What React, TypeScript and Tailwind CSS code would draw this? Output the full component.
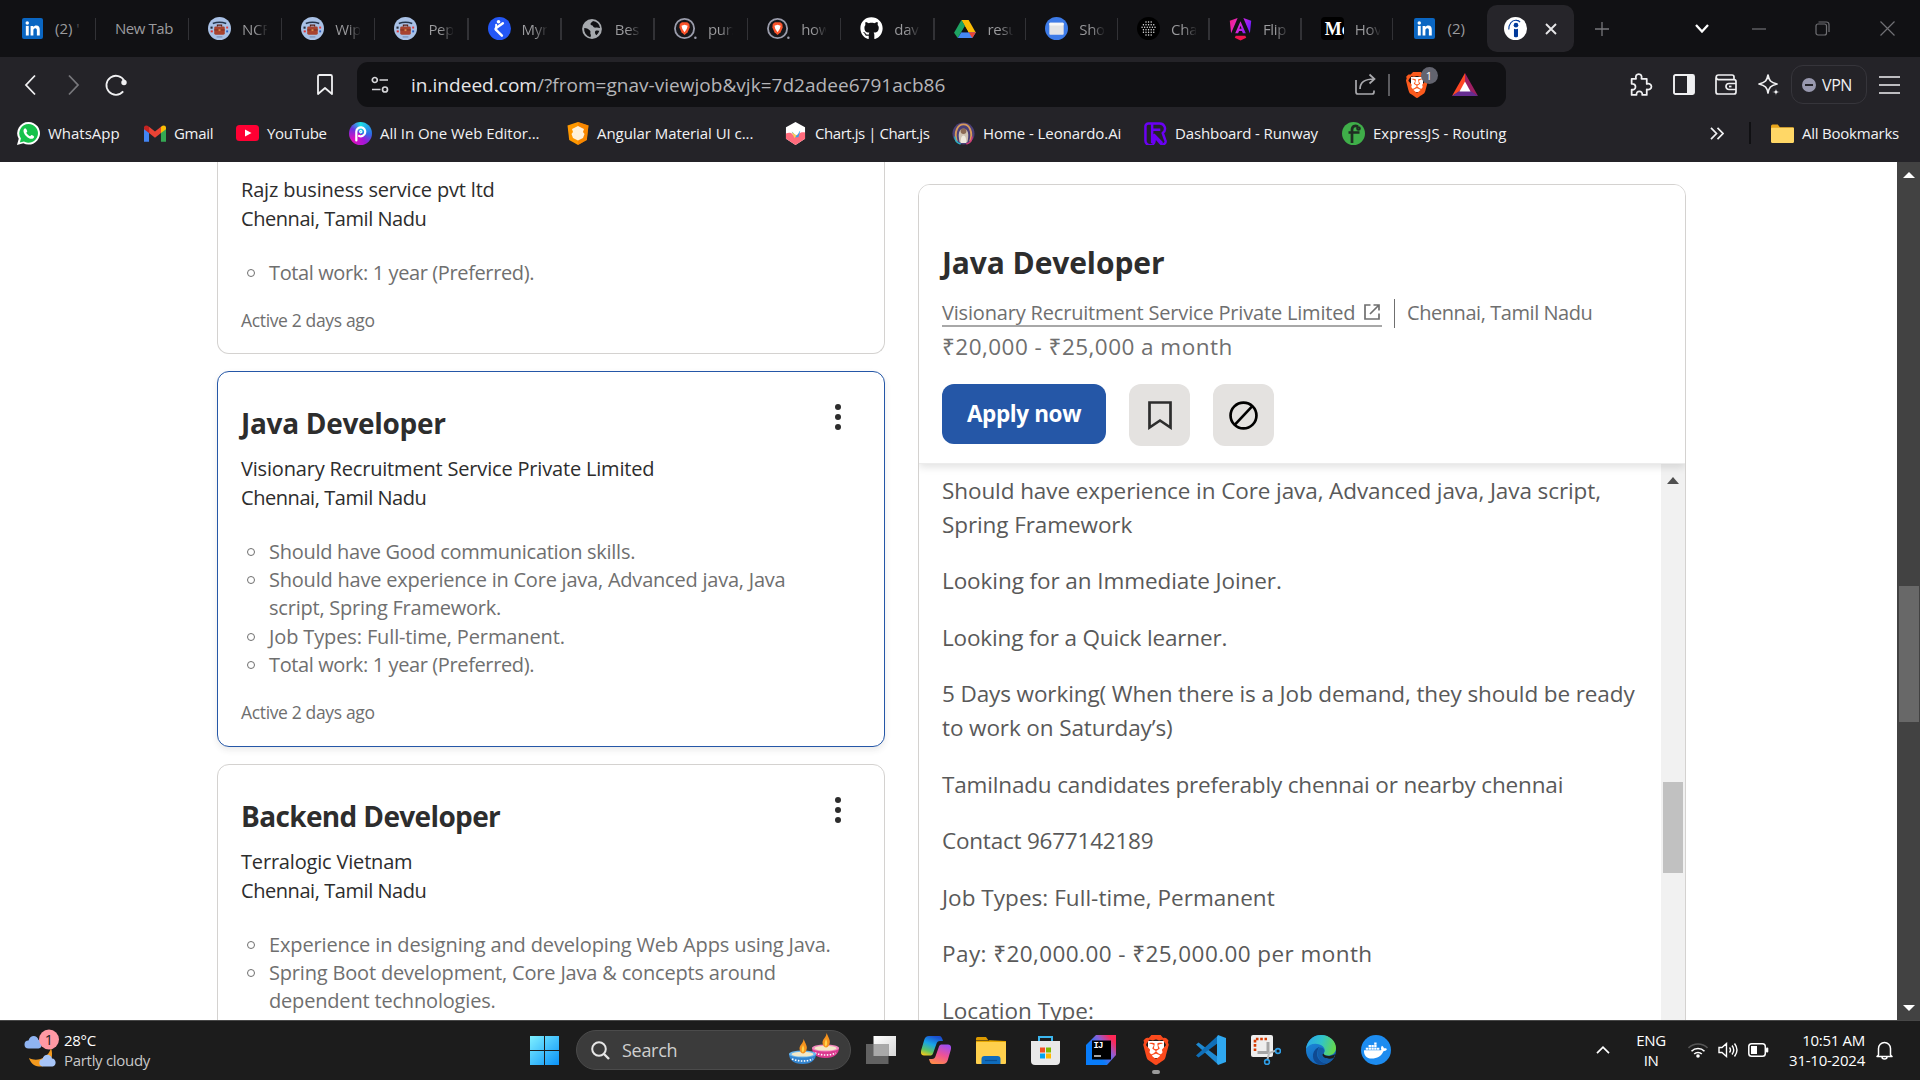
import type { ReactNode } from 'react'
import { FaGithub, FaDocker } from 'react-icons/fa'
import { SiBrave } from 'react-icons/si'

/* ---------- Browser icons ---------- */

const LinkedIn = () => (
  <div className="flex h-[21px] w-[21px] items-center justify-center rounded-[2px] bg-[#0a66c2]">
    <svg viewBox="0 0 24 24" className="h-[21px] w-[21px]" fill="#fff">
      <rect x="4.400" y="9" width="3.300" height="11" />
      <circle cx="6" cy="5.600" r="2" />
      <path d="M9.800 9H13v1.600c.6-1.100 1.800-1.900 3.400-1.900 3 0 3.900 2 3.900 4.700V20H17v-5.800c0-1.500-.4-2.600-1.800-2.600S13 12.700 13 14.200V20H9.800z" />
    </svg>
  </div>
)

const JobSeeker = () => (
  <svg viewBox="0 0 24 24" className="h-[23px] w-[23px]">
    <circle cx="12" cy="12" r="12" fill="#a9c1e6" />
    <path d="M5 6.800q7-2.600 14 0" stroke="#27364d" strokeWidth="1.500" fill="none" />
    <rect x="6.500" y="9.800" width="11" height="8.700" rx="1.500" fill="#a8432f" />
    <path d="M9.800 9.800V8.500h4.400v1.300" stroke="#5a2015" strokeWidth="1.200" fill="none" />
    <rect x="6.500" y="13" width="11" height="1" fill="#7d3021" />
    <rect x="11" y="12.700" width="2" height="2" fill="#d8894a" />
    <rect x="2.600" y="10" width="2.200" height="2.200" fill="#222b3a" />
    <rect x="2.800" y="14" width="2.200" height="2" fill="#d33" />
    <rect x="19" y="10" width="2" height="2" fill="#e33a3a" />
    <rect x="19" y="14" width="2" height="2" fill="#2a5fc0" />
    <rect x="9" y="20.300" width="6" height="1" fill="#6f86ad" />
  </svg>
)

const BlueFigure = () => (
  <svg viewBox="0 0 24 24" className="h-[23px] w-[23px]">
    <circle cx="12" cy="12" r="12" fill="#2457f5" />
    <circle cx="11" cy="5" r="1.900" fill="#fff" />
    <path d="M15.500 6.500 8.500 11.500c-.8.600-.8 1.400 0 2l6 6" stroke="#fff" strokeWidth="2.600" fill="none" strokeLinecap="round" />
    <path d="M8.500 8v5" stroke="#fff" strokeWidth="2" strokeLinecap="round" />
  </svg>
)

const Globe = () => (
  <svg viewBox="0 0 24 24" className="h-[22px] w-[22px]">
    <circle cx="12" cy="12" r="10.800" fill="#a6a9ad" />
    <path d="M3.500 11c3 .2 5 1.200 6.500 3 1 1.400-.5 2.400.5 3.600.6 1 .4 2.400-.4 3.400A9 9 0 0 1 3.500 11zM13 3.200c-1 1.800-2.800 1.600-2.600 3.600.2 1.400 2.200.8 2.800 2.200.5 1.400 2 1.800 3.400 1.400 1.600-.4 2.800.6 4.200.4A9 9 0 0 0 13 3.200zM16 14c1.400-.8 3-.4 4 0-.6 2-1.800 3.600-3.200 4.800-1.400-1.200-2.400-3.400-.8-4.800z" fill="#111114" />
  </svg>
)

const BraveSearch = () => (
  <svg viewBox="0 0 24 24" className="h-[23px] w-[23px]">
    <circle cx="11" cy="12" r="10" fill="#17171b" stroke="#9a9cab" strokeWidth="1.900" />
    <path d="M6 7.300 8.200 5.500h5.600L16 7.300l.4 3.700-2.200 5L11 18.800 7.800 16l-2.200-5z" fill="#fb542b" />
    <path d="m7.800 9 3.200-.8L14.200 9l-.8 3.300L11 16l-2.400-3.700z" fill="#fff" />
    <circle cx="22.300" cy="21.700" r="1.300" fill="#9a9cab" />
  </svg>
)

const Drive = ({ className }: { className: string }) => (
  <svg viewBox="0 0 24 22" className={className}>
    <path d="M8 1h8l8 14h-8z" fill="#fbbc04" />
    <path d="M8 1 0 15l4 6 8-13.500z" fill="#1ea362" />
    <path d="M4 21h16l4-6.500H8z" fill="#4688f4" />
    <path d="M16 14.500h8L20 21z" fill="#ea4335" />
    <path d="M12 8.500 8.300 14.500h7.400z" fill="#111114" />
  </svg>
)

const BlueWindow = () => (
  <svg viewBox="0 0 24 24" className="h-[23px] w-[23px]">
    <circle cx="12" cy="12" r="12" fill="#3d7be8" />
    <rect x="4.500" y="6" width="15" height="12.500" rx="1" fill="#e3e4e6" />
    <rect x="4.500" y="6" width="15" height="2.800" rx="1" fill="#f7f7f7" />
  </svg>
)

const Dots = () => (
  <svg viewBox="0 0 24 24" className="h-[23px] w-[23px]">
    <circle cx="12" cy="12" r="12" fill="#000" />
    <g stroke="#e4e4e4" strokeLinecap="round" strokeWidth="1.500" strokeDasharray="0 2.700">
      <path d="M9.400 5.300h6M6.700 8h11M5.300 10.700h13.600M6.700 13.400h11M6.700 16h11M9.400 18.700h6" />
    </g>
  </svg>
)

const AngularTab = () => (
  <svg viewBox="0 0 24 25" className="h-[24px] w-[23px]">
    <defs>
      <linearGradient id="ang" x1="0" y1="0" x2="1" y2="0.300">
        <stop offset="0" stopColor="#f0197a" />
        <stop offset="0.450" stopColor="#e92bd2" />
        <stop offset="1" stopColor="#7a1cff" />
      </linearGradient>
    </defs>
    <path d="M9 1 .8 4l1.400 13z M15 1l8.200 3-1.400 13z M12 4.500 6.500 17h3l1-2.500h3l1 2.500h3zM12 9l1.200 3.200h-2.400z" fill="url(#ang)" fillRule="evenodd" />
    <path d="M7 19.500h10l1 2-6 3-6-3z" fill="#f0144f" />
  </svg>
)

const Medium = () => (
  <div className="flex h-[23px] w-[23px] items-center overflow-hidden rounded-[4px] bg-black pl-1 font-['Liberation_Serif'] text-[18px] font-bold leading-none text-white">
    <span className="whitespace-nowrap">Mc</span>
  </div>
)

const IndeedIcon = () => (
  <svg viewBox="0 0 24 24" className="h-[23px] w-[23px]">
    <circle cx="12" cy="12" r="12" fill="#fff" />
    <circle cx="12.500" cy="8.500" r="2.400" fill="#003a9b" />
    <path d="M10.400 12.300c1.500.7 2.800.6 4.200 0V20c0 1.600-4.200 1.600-4.200 0z" fill="#003a9b" />
    <path d="M5 13c-.2-5 3-10.500 8.500-9.500 1.600.2 2.600 1 3.300 1.800" stroke="#003a9b" strokeWidth="1.200" fill="none" />
  </svg>
)

/* ---------- Tabs ---------- */

function Tab({ icon, label, width = 'w-[93.200px]' }: { icon: ReactNode; label: string; width?: string }) {
  return (
    <div className={`flex h-full shrink-0 items-center ${width}`}>
      <div className="flex flex-1 items-center pl-[19px]">
        <div className="flex w-[23px] shrink-0 items-center justify-center">{icon}</div>
        <div className="ml-[11px] w-[25px] overflow-hidden whitespace-nowrap bg-gradient-to-r from-[#9b9b9e] from-50% to-[#9b9b9e]/10 bg-clip-text text-[15px] leading-6 tracking-[-0.300px] text-transparent">
          {label}
        </div>
      </div>
      <div className="h-[22px] w-[1.500px] bg-[#323236]" />
    </div>
  )
}

function TabStrip() {
  const narrow = 'w-[91.800px]'
  return (
    <div className="flex h-[57px] items-center bg-[#111114] text-[#9b9b9e]">
      <div className="flex h-full w-[96px] shrink-0 items-center pl-[22px]">
        <LinkedIn />
        <div className="ml-[12px] w-[26px] flex-1 whitespace-nowrap text-[15px]">(2) <span className="text-[#4a4a4e]">'</span></div>
        <div className="h-[22px] w-[1.500px] bg-[#323236]" />
      </div>
      <div className="flex h-full w-[93px] shrink-0 items-center pl-[19px]">
        <div className="flex-1 whitespace-nowrap text-[15px] tracking-[-0.450px]">New Tab</div>
        <div className="h-[22px] w-[1.500px] bg-[#323236]" />
      </div>
      <Tab icon={<JobSeeker />} label="NCF" />
      <Tab icon={<JobSeeker />} label="Wip" />
      <Tab icon={<JobSeeker />} label="Pep" />
      <Tab icon={<BlueFigure />} label="Myn" />
      <Tab icon={<Globe />} label="Bes" />
      <Tab icon={<BraveSearch />} label="pur:" />
      <Tab icon={<BraveSearch />} label="how" />
      <Tab icon={<FaGithub className="h-[23px] w-[23px] text-white" />} label="dav" />
      <Tab icon={<Drive className="h-[20px] w-[22px]" />} label="resu" width={narrow} />
      <Tab icon={<BlueWindow />} label="Sho" width={narrow} />
      <Tab icon={<Dots />} label="Cha" width={narrow} />
      <Tab icon={<AngularTab />} label="Flip" width={narrow} />
      <Tab icon={<Medium />} label="Hov" width={narrow} />
      <div className="flex h-full w-[94px] shrink-0 items-center pl-[21px]">
        <LinkedIn />
        <div className="ml-[12px] whitespace-nowrap text-[15px]">(2)</div>
      </div>
      <div className="flex h-[47px] w-[87px] shrink-0 items-center rounded-[10px] bg-[#26252a] pl-[17px]">
        <IndeedIcon />
        <svg viewBox="0 0 12 12" className="ml-[18px] h-[12px] w-[12px]" stroke="#e6e6e8" strokeWidth="1.900">
          <path d="m1 1 10 10M11 1 1 11" />
        </svg>
      </div>
      <svg viewBox="0 0 14 14" className="ml-[21px] h-[14px] w-[14px]" stroke="#77777b" strokeWidth="1.300">
        <path d="M7 0v14M0 7h14" />
      </svg>
      <svg viewBox="0 0 14 9" className="ml-[86px] h-[9px] w-[14px]" stroke="#fff" strokeWidth="2.300" fill="none">
        <path d="m1 1 6 6.500L13 1" />
      </svg>
      <svg viewBox="0 0 14 2" className="ml-[43px] h-[2px] w-[14px]"><path d="M0 1h14" stroke="#707074" strokeWidth="1.200" /></svg>
      <svg viewBox="0 0 15 15" className="ml-[49px] h-[15px] w-[15px]" stroke="#707074" strokeWidth="1.200" fill="none">
        <rect x="1" y="3" width="10.500" height="11" rx="2" />
        <path d="M3.500 1h8A2.500 2.500 0 0 1 14 3.500V11" />
      </svg>
      <svg viewBox="0 0 15 15" className="ml-[50px] h-[15px] w-[15px]" stroke="#707074" strokeWidth="1.200">
        <path d="m.5.5 14 14m0-14-14 14" />
      </svg>
    </div>
  )
}

/* ---------- Toolbar ---------- */

const ic = 'shrink-0 overflow-visible'

function Toolbar() {
  return (
    <div className="flex h-[55px] items-center bg-[#242328]">
      <svg viewBox="0 0 11 20" className={`ml-[25px] h-[20px] w-[11px] ${ic}`} stroke="#f0f0f2" strokeWidth="1.800" fill="none"><path d="m10 .5-9 9.500 9 9.500" /></svg>
      <svg viewBox="0 0 11 20" className={`ml-[32px] h-[20px] w-[11px] ${ic}`} stroke="#77777b" strokeWidth="1.800" fill="none"><path d="m1 .5 9 9.500-9 9.500" /></svg>
      <svg viewBox="0 0 22 22" className={`ml-[26px] h-[22px] w-[22px] ${ic}`} stroke="#f0f0f2" strokeWidth="1.800" fill="none">
        <path d="M18.200 17.400A9.500 9.500 0 1 1 19.400 7" /><circle cx="19" cy="8.500" r="2.700" fill="#f0f0f2" stroke="none" />
      </svg>
      <svg viewBox="0 0 16 21" className={`ml-[190px] h-[21px] w-[16px] ${ic}`} stroke="#f0f0f2" strokeWidth="1.800" fill="none" strokeLinejoin="round">
        <path d="M1 2.500A1.500 1.500 0 0 1 2.500 1h11A1.500 1.500 0 0 1 15 2.500V20l-7-6-7 6z" />
      </svg>
      <div className="ml-[24px] flex h-[45px] w-[1149px] shrink-0 items-center rounded-[11px] bg-[#111114] pl-[14px]">
        <svg viewBox="0 0 18 18" className={`h-[18px] w-[18px] ${ic}`} stroke="#d6d6d9" strokeWidth="1.700" fill="none">
          <circle cx="3.800" cy="4" r="2.500" /><path d="M8.500 4H17M1 13.500h8.500" /><circle cx="14" cy="13.500" r="2.500" />
        </svg>
        <div className="ml-[22px] w-[534px] whitespace-nowrap text-[19px] leading-7 tracking-[0.030px] text-[#b5b5b8]">
          <span className="text-[#e6e6e8]">in.indeed.com</span>/?from=gnav-viewjob&amp;vjk=7d2adee6791acb86
        </div>
        <svg viewBox="0 0 21 21" className={`ml-[410px] h-[21px] w-[21px] ${ic}`} stroke="#a9a9ad" strokeWidth="1.700" fill="none">
          <path d="M1 6v12a2 2 0 0 0 2 2h14a2 2 0 0 0 2-2v-1.500M5 15c0-6.500 5-10 14-10M14.500.5 19.500 5l-5 4.500" />
        </svg>
        <div className="ml-[12px] h-[22px] w-[1.500px] bg-[#5c5c60]" />
        <div className="relative ml-[16px] h-[26px] w-[23px]">
          <div className="absolute left-[5px] top-[5px] h-[15px] w-[12px] bg-white" />
          <SiBrave className="absolute left-[-2px] top-0 h-[26px] w-[26px] text-[#fb5a1d]" />
          <div className="absolute left-[15px] top-[-5px] flex h-[17px] w-[17px] items-center justify-center rounded-full bg-[#63646f] text-[11px] leading-none text-white">1</div>
        </div>
        <svg viewBox="0 0 26 23" className={`ml-[23px] h-[23px] w-[26px] ${ic}`}>
          <path d="M13 0 0 23l13-7.500z" fill="#ff4724" /><path d="m13 0 13 23-13-7.500z" fill="#9e1f63" /><path d="M0 23h26l-13-9z" fill="#662d91" /><path d="m13 8.500 5.500 10h-11z" fill="#fff" />
        </svg>
      </div>
      <svg viewBox="0 0 24 24" className={`ml-[122px] h-[25px] w-[25px] ${ic}`} stroke="#f0f0f2" strokeWidth="1.700" fill="none" strokeLinejoin="round">
        <path d="M3.500 6.500h4.200c-.8-2.800.6-4.500 2.600-4.500s3.400 1.700 2.600 4.500H18v5c2.600-.8 4.500.4 4.500 2.500S20.600 17.500 18 16.600V22h-4.300c.2-2.200-1-3.400-2.800-3.400S8 19.800 8.200 22H3.500v-5c2.400.3 3.700-.9 3.700-2.800s-1.300-3-3.700-2.700z" />
      </svg>
      <svg viewBox="0 0 22 21" className={`ml-[20px] h-[21px] w-[22px] ${ic}`}>
        <rect x="1" y="1" width="20" height="19" rx="1.500" stroke="#f0f0f2" strokeWidth="1.900" fill="none" /><path d="M14 1h7v19h-7z" fill="#f0f0f2" />
      </svg>
      <svg viewBox="0 0 22 21" className={`ml-[20px] h-[21px] w-[22px] ${ic}`} stroke="#f0f0f2" strokeWidth="1.700" fill="none">
        <path d="M19 5.500V3a2 2 0 0 0-2-2H3.500a2.300 2.300 0 0 0 0 4.600H19a2 2 0 0 1 2 2V18a2 2 0 0 1-2 2H3a2 2 0 0 1-2-2V3.500M21 9.500h-7a3 3 0 0 0 0 6h7" /><path d="M14 12.500h2.500" />
      </svg>
      <svg viewBox="0 0 22 22" className={`ml-[21px] h-[22px] w-[22px] ${ic}`} stroke="#f0f0f2" strokeWidth="1.700" fill="none" strokeLinejoin="round">
        <path d="M10 1c1 5.500 2.500 7.500 9 9-6.500 1.500-8 3.500-9 9-1-5.500-2.500-7.500-9-9 6.500-1.500 8-3.500 9-9z" /><path d="M18 14c.3 2.600.9 3.400 4 4-3.100.6-3.700 1.400-4 4-.3-2.600-.9-3.400-4-4 3.100-.6 3.700-1.400 4-4z" fill="#f0f0f2" stroke="#242328" strokeWidth="0.600" />
      </svg>
      <div className="ml-[11px] flex h-[39px] w-[76px] shrink-0 items-center rounded-[12px] border border-[#36353b] pl-[10px] text-[16px] leading-none tracking-[-0.400px] text-[#f0f0f2]">
        <div className="flex h-[14px] w-[14px] items-center justify-center rounded-full bg-[#9898ae]"><div className="h-[2px] w-[8px] bg-[#242328]" /></div>
        <span className="ml-[6px]">VPN</span>
      </div>
      <svg viewBox="0 0 21 18" className={`ml-[12px] h-[18px] w-[21px] ${ic}`} stroke="#f0f0f2" strokeWidth="1.700"><path d="M0 1h21M0 9h21M0 17h21" /></svg>
    </div>
  )
}

/* ---------- Bookmarks ---------- */

function Bookmark({ icon, label, width, spacing = 'tracking-[-0.100px]' }: { icon: ReactNode; label: string; width: string; spacing?: string }) {
  return (
    <div className={`flex shrink-0 items-center ${width}`}>
      <div className="flex w-[23px] shrink-0 justify-center">{icon}</div>
      <span className={`ml-[8px] whitespace-nowrap text-[15px] leading-6 ${spacing}`}>{label}</span>
    </div>
  )
}

function BookmarksBar() {
  return (
    <div className="flex h-[50px] items-center bg-[#242328] pb-[8px] pl-[17px] text-[#f2f2f4]">
      <Bookmark width="w-[126px]" spacing="tracking-[-0.020px]" label="WhatsApp" icon={
        <svg viewBox="0 0 24 24" className="h-[23px] w-[23px]">
          <path d="M12.200 0a11.800 11.800 0 1 1-5.600 22.200L0 24l1.800-6.400A11.800 11.800 0 0 1 12.200 0z" fill="#fff" />
          <path d="M12.200 2a9.800 9.800 0 1 1-5 18.300L3 21.300l1.100-4A9.800 9.800 0 0 1 12.200 2z" fill="#16c24b" />
          <path d="M8.600 6.600c-.9.100-1.800 1.200-1.800 2.700 0 3.300 4.600 8.200 8.200 8.200 1.600 0 2.900-1 2.900-2.200 0-.7-2.400-1.900-2.900-1.800-.5.200-.9 1.300-1.400 1.300-1.100-.1-3.600-2.300-3.900-3.500 0-.5 1-1 1-1.500S9.500 6.600 8.600 6.600z" fill="#fff" />
        </svg>} />
      <Bookmark width="w-[93px]" spacing="tracking-[-0.300px]" label="Gmail" icon={
        <svg viewBox="0 0 24 18" className="h-[17px] w-[22px]"><path d="M0 2v16h5.500V6z" fill="#4285f4" /><path d="M24 2v16h-5.500V6z" fill="#34a853" /><path d="m5.500 1.700 6.500 5 6.500-5V8.500l-6.500 5-6.500-5z" fill="#ea4335" /><path d="M18.500 8.500V1.700C21-.5 24 0 24 3v1.300z" fill="#fbbc04" /><path d="M5.500 8.500V1.700C3-.5 0 0 0 3v1.300z" fill="#c5221f" /></svg>} />
      <Bookmark width="w-[113px]" spacing="tracking-[-0.280px]" label="YouTube" icon={
        <svg viewBox="0 0 23 16" className="h-[16px] w-[23px]"><rect width="23" height="16" rx="3.500" fill="#ff0033" /><path d="m9 4.500 6.500 3.500L9 11.500z" fill="#fff" /></svg>} />
      <Bookmark width="w-[217px]" spacing="tracking-[-0.040px]" label="All In One Web Editor..." icon={
        <div className="flex h-[23px] w-[23px] items-center justify-center rounded-full bg-[conic-gradient(#1de0e6_0deg,#2b6fe8_90deg,#a018d8_150deg,#e010c0_230deg,#6a30e0_300deg,#1de0e6_360deg)]">
          <svg viewBox="0 0 14 18" className="h-[17px] w-[13px]" stroke="#fff" strokeWidth="2.400" fill="none" strokeLinecap="round"><path d="M2.500 16.500V7a4.800 4.800 0 1 1 3 4.600" /><circle cx="7.300" cy="7" r="1.200" strokeWidth="1.200" /></svg>
        </div>} />
      <Bookmark width="w-[218px]" spacing="tracking-[-0.060px]" label="Angular Material UI c..." icon={
        <svg viewBox="0 0 22 23" className="h-[23px] w-[22px]"><path d="m11 0 10.500 3.500L19.800 18 11 23l-8.800-5L.5 3.500z" fill="#ff9800" /><path d="m11 0 10.500 3.500L19.800 18 11 23z" fill="#f57c00" opacity=".6" /><path d="m11 4 6 3-1 3 1.500 2-1.500 4-5 2.500L6 16l-1.500-4L6 10 5 7z" fill="#fff1dc" /></svg>} />
      <Bookmark width="w-[168px]" spacing="tracking-[-0.440px]" label="Chart.js | Chart.js" icon={
        <svg viewBox="0 0 22 24" className="h-[23px] w-[21px]"><path d="m11 0 10 5.500v12L11 24 1 17.500v-12z" fill="#fff" /><path d="M1 12c3-1 5-1 7 1s4 1 6-.5 4-2 7-1.500v6.500L11 24 1 17.500z" fill="#ff6b7c" /><path d="M7 10c2 1 3 4 5 4s2-4 4-5l-2 7h-4z" fill="#36a2eb" /><path d="M7 10.500 12 14l-2 3z" fill="#ffce56" /></svg>} />
      <Bookmark width="w-[192px]" spacing="tracking-[-0.060px]" label="Home - Leonardo.Ai" icon={
        <svg viewBox="0 0 24 24" className="h-[23px] w-[23px]"><circle cx="12" cy="12" r="11.500" fill="#4a3f78" /><path d="M5 20C2 10 6 2.500 12 2.500S22 10 19 20" stroke="#d79a5a" strokeWidth="2" fill="none" /><path d="M8 21c-2-8-1-14 4-14s6 6 4 14z" fill="#cfc3b4" /><circle cx="12" cy="9.500" r="3" fill="#8c6a55" /><path d="M9 22c0-5 1-8 3-8s3 3 3 8z" fill="#efe9df" /><path d="M3 15c0 4 3 7 6 8" stroke="#2ab5c9" strokeWidth="1.500" fill="none" /><path d="M21 15c0 4-3 7-6 8" stroke="#d23a78" strokeWidth="1.500" fill="none" /></svg>} />
      <Bookmark width="w-[198px]" spacing="tracking-[-0.120px]" label="Dashboard - Runway" icon={
        <svg viewBox="0 0 24 24" className="h-[23px] w-[23px]" stroke="#6a00f4" strokeWidth="2.600" fill="none" strokeLinejoin="round"><path d="M1.500 4.500a3 3 0 0 1 3-3H16a5.500 5.500 0 0 1 3.500 10l2.500 7a3 3 0 0 1-5 3.500l-6-7v4.500a3 3 0 0 1-9.500 0zM8.500 2v20M9 8h8M10 13l9 9" /></svg>} />
      <Bookmark width="w-[368px]" spacing="tracking-[0.020px]" label="ExpressJS - Routing" icon={
        <div className="flex h-[23px] w-[23px] items-center justify-center rounded-full bg-[#3fae49]"><svg viewBox="0 0 20 22" className="h-[22px] w-[20px]" stroke="#1f2d22" strokeWidth="2.700" fill="none"><path d="M8 21V8c0-4 3-5 6-3.500M4.500 10.500h11" /><circle cx="14.500" cy="6.500" r="1" /></svg></div>} />
      <svg viewBox="0 0 14 13" className="h-[13px] w-[14px] shrink-0" stroke="#f0f0f2" strokeWidth="1.700" fill="none"><path d="m1 .8 5.500 5.700L1 12.200M7.500.8 13 6.500l-5.500 5.700" /></svg>
      <div className="ml-[25px] h-[22px] w-[2px] shrink-0 bg-[#101013]" />
      <div className="ml-[20px] flex items-center">
        <svg viewBox="0 0 22 18" className="h-[19px] w-[23px]"><path d="M0 2a1.500 1.500 0 0 1 1.500-1.500h5L8.500 3H21a1 1 0 0 1 1 1v4H0z" fill="#e8a51c" /><rect y="3.500" width="22" height="14.500" rx="1" fill="#ffd766" /></svg>
        <span className="ml-[8px] whitespace-nowrap text-[15px] tracking-[-0.230px]">All Bookmarks</span>
      </div>
    </div>
  )
}

/* ---------- Job list ---------- */

type Line = { text: string; spacing: string }
type Job = { title?: Line; company: string; points: Line[]; active?: string; selected?: boolean; height: string }

const jobs: Job[] = [
  {
    company: 'Rajz business service pvt ltd',
    points: [{ text: 'Total work: 1 year (Preferred).', spacing: 'tracking-[-0.380px]' }],
    active: 'Active 2 days ago',
    height: 'h-[192px]',
  },
  {
    title: { text: 'Java Developer', spacing: 'tracking-[-0.300px]' },
    company: 'Visionary Recruitment Service Private Limited',
    points: [
      { text: 'Should have Good communication skills.', spacing: 'tracking-[-0.270px]' },
      { text: 'Should have experience in Core java, Advanced java, Java script, Spring Framework.', spacing: 'tracking-[-0.220px]' },
      { text: 'Job Types: Full-time, Permanent.', spacing: 'tracking-[-0.130px]' },
      { text: 'Total work: 1 year (Preferred).', spacing: 'tracking-[-0.380px]' },
    ],
    active: 'Active 2 days ago',
    selected: true,
    height: 'h-[376px]',
  },
  {
    title: { text: 'Backend Developer', spacing: 'tracking-[-0.640px]' },
    company: 'Terralogic Vietnam',
    points: [
      { text: 'Experience in designing and developing Web Apps using Java.', spacing: 'tracking-[-0.140px]' },
      { text: 'Spring Boot development, Core Java & concepts around dependent technologies.', spacing: 'tracking-[-0.180px]' },
    ],
    height: 'h-[376px]',
  },
]

function JobCard({ job }: { job: Job }) {
  const frame = job.selected ? 'border-[#2557a7] shadow-[0_3px_6px_rgba(45,45,45,0.100)]' : 'border-[#d4d2d0]'
  const shape = job.title ? 'rounded-[12px] border pt-[30px]' : 'rounded-b-[12px] border border-t-0 pt-[13px]'
  return (
    <div className={`w-[668px] shrink-0 bg-white px-[23px] text-[20px] text-[#2d2d2d] ${frame} ${shape} ${job.height}`}>
      {job.title && (
        <div className="mb-[10px] flex h-[42px] items-center justify-between">
          <h2 className={`whitespace-nowrap text-[28px] font-bold leading-[42px] ${job.title.spacing}`}>{job.title.text}</h2>
          <svg viewBox="0 0 8 26" className="mb-[13px] mr-[19px] h-[26px] w-[8px]" fill="#2d2d2d"><circle cx="4" cy="3" r="3" /><circle cx="4" cy="13" r="3" /><circle cx="4" cy="23" r="3" /></svg>
        </div>
      )}
      <p className="leading-[29px] tracking-[-0.180px]">{job.company}</p>
      <p className="leading-[29px] tracking-[-0.440px]">Chennai, Tamil Nadu</p>
      <ul className="mt-[26px] leading-[28.200px] text-[#6f6f6f]">
        {job.points.map((point) => (
          <li key={point.text} className="flex">
            <span className="ml-[6px] mr-[14px] mt-[10px] h-[8px] w-[8px] shrink-0 rounded-full border border-[#6f6f6f]" />
            <span className={`w-[570px] ${point.spacing}`}>{point.text}</span>
          </li>
        ))}
      </ul>
      {job.active && <p className="mt-[20px] text-[17.500px] leading-[26px] tracking-[-0.350px] text-[#6f6f6f]">{job.active}</p>}
    </div>
  )
}

/* ---------- Job detail ---------- */

const paragraphs: Line[] = [
  { text: 'Should have experience in Core java, Advanced java, Java script, Spring Framework', spacing: 'tracking-[-0.090px]' },
  { text: 'Looking for an Immediate Joiner.', spacing: 'tracking-[-0.080px]' },
  { text: 'Looking for a Quick learner.', spacing: 'tracking-[-0.160px]' },
  { text: '5 Days working( When there is a Job demand, they should be ready to work on Saturday’s)', spacing: 'tracking-[-0.110px]' },
  { text: 'Tamilnadu candidates preferably chennai or nearby chennai', spacing: 'tracking-[-0.160px]' },
  { text: 'Contact 9677142189', spacing: 'tracking-[-0.220px]' },
  { text: 'Job Types: Full-time, Permanent', spacing: 'tracking-[0.040px]' },
  { text: 'Pay: ₹20,000.00 - ₹25,000.00 per month', spacing: 'tracking-[0.420px]' },
  { text: 'Location Type:', spacing: 'tracking-[0.040px]' },
]

function Detail() {
  return (
    <div className="mt-[22px] flex h-[900px] w-[768px] shrink-0 flex-col overflow-hidden rounded-t-[12px] border border-[#d4d2d0]">
      <div className="z-10 h-[279px] shrink-0 border-b border-[#ececec] bg-white px-[23px] pt-[55px] text-[20px] text-[#6f6f6f] shadow-[0_3px_8px_rgba(0,0,0,0.120)]">
        <h1 className="text-[30px] font-bold leading-[45px] tracking-[-0.100px] text-[#2d2d2d]">Java Developer</h1>
        <div className="mt-[13px] flex h-[30px] items-center">
          <span className="flex h-[28px] items-center border-b-2 border-[#a8a8a8] tracking-[-0.180px]">
            <span className="w-[414px] whitespace-nowrap pt-px leading-[26px]">Visionary Recruitment Service Private Limited</span>
            <svg viewBox="0 0 16 16" className="ml-[8px] mr-[2px] h-[16px] w-[16px]" stroke="#6f6f6f" strokeWidth="1.700" fill="none"><path d="M6.500 1H1v14h14V9.500M9.500 1H15v5.500M15 1 6 10" /></svg>
          </span>
          <span className="ml-[12px] h-[29px] w-px bg-[#6f6f6f]" />
          <span className="ml-[12px] whitespace-nowrap tracking-[-0.440px]">Chennai, Tamil Nadu</span>
        </div>
        <p className="text-[22.500px] leading-[38px] tracking-[0.460px]">₹20,000 - ₹25,000 a month</p>
        <div className="mt-[18px] flex gap-[23px]">
          <button className="h-[60px] w-[164px] rounded-[12px] bg-[#2557a7] text-[22.500px] font-bold leading-none tracking-[-0.380px] text-white">Apply now</button>
          <button className="flex h-[62px] w-[61px] items-center justify-center rounded-[12px] bg-[#e4e2e0]">
            <svg viewBox="0 0 24 29" className="h-[29px] w-[24px]" stroke="#2d2d2d" strokeWidth="2.700" fill="none"><path d="M1.500 1.500h21v25L12 19.500 1.500 26.500z" /></svg>
          </button>
          <button className="flex h-[62px] w-[61px] items-center justify-center rounded-[12px] bg-[#e4e2e0]">
            <svg viewBox="0 0 28 28" className="h-[29px] w-[29px]" stroke="#000" strokeWidth="2.600" fill="none"><circle cx="14" cy="14" r="12.500" /><path d="M22.500 5 5.500 23" /></svg>
          </button>
        </div>
      </div>
      <div className="flex flex-1 justify-between">
        <div className="flex w-[727px] flex-col gap-[22.750px] pl-[23px] pt-[10px] text-[22.500px] leading-[33.750px] text-[#595959]">
          {paragraphs.map((p) => <p key={p.text} className={p.spacing}>{p.text}</p>)}
        </div>
        <div className="flex h-full w-[24px] flex-col items-center bg-[#f1f1f1]">
          <div className="mt-[13px] h-0 w-0 border-x-[6px] border-b-[7px] border-x-transparent border-b-[#505050]" />
          <div className="mt-[298px] h-[91px] w-[20px] bg-[#c1c1c1]" />
        </div>
      </div>
    </div>
  )
}

/* ---------- Taskbar ---------- */

const TaskIcon = ({ children }: { children: ReactNode }) => <div className="flex h-full w-[55px] shrink-0 items-center justify-center">{children}</div>

const lamp = (x: number, y: number, from: string, to: string) => (
  <g transform={`translate(${x} ${y})`}>
    <path d="M0 11c0 5 4 10 13.500 10S27 16 27 11z" fill={to} />
    <ellipse cx="13.500" cy="11" rx="13.500" ry="3.600" fill={from} />
    <ellipse cx="13.500" cy="11.200" rx="11" ry="2.400" fill="#f2e8c8" />
    <path d="M3 16q10.500 4 21 0" stroke="#fff" strokeWidth="1.600" strokeDasharray="1.500 1.500" fill="none" />
    <path d="M14.500-4c2 4.500 4 7.500 3.200 10-.4 2-1.600 4.500-3.400 4.500S10.500 8.500 10.500 5.500c0-4 4-5 4-9.500z" fill="#f5921e" />
    <path d="M14 2c1.500 3 1.800 6-.2 7.500-1.800-1.300-1-4.500.2-7.500z" fill="#ffd24a" />
  </g>
)

function Taskbar() {
  return (
    <div className="flex h-[60px] shrink-0 items-center border-t border-[#474747] bg-[#1c1c1c] pb-px text-white">
      <div className="flex w-[517px] shrink-0 items-center pl-[24px]">
        <svg viewBox="0 0 36 42" className="h-[42px] w-[36px] shrink-0">
          <path d="M5 29c7 4 19 1 22-10 4 12-4 19-12 18.500C10 37 6.500 34 5 29z" fill="#f39a1e" />
          <path d="M4.500 19.500a4 4 0 0 1 0-8C5.500 6 13 5 14.500 11c4 0 5 8 0 8.500z" fill="#8fb4f2" />
          <path d="M18.500 37.500a3.800 3.800 0 0 1 0-7.500c1-5 8-6 9.500-.5 4.500 0 5 7.500.5 8z" fill="#a7c5f8" />
          <circle cx="25" cy="10.500" r="10" fill="#ff99a4" />
          <text x="25" y="15.800" textAnchor="middle" fontSize="14.500" fill="#1c1c1c" fontFamily="Open Sans">1</text>
        </svg>
        <div className="ml-[4px] text-[15px] leading-[20px]">
          <p className="tracking-[-0.300px]">28°C</p>
          <p className="tracking-[-0.300px] text-[#c8c8c8]">Partly cloudy</p>
        </div>
      </div>
      <TaskIcon>
        <svg viewBox="0 0 29 29" className="h-[29px] w-[29px]"><defs><linearGradient id="win" x1="0" y1="0" x2="1" y2="1"><stop offset="0" stopColor="#7ef0ff" /><stop offset="1" stopColor="#0a92f8" /></linearGradient></defs><path d="M0 0h14v14H0zM15 0h14v14H15zM0 15h14v14H0zM15 15h14v14H15z" fill="url(#win)" /></svg>
      </TaskIcon>
      <div className="ml-[4px] flex h-[40px] w-[275px] shrink-0 items-center rounded-full border border-[#4b4b4b] bg-[#3b3b3b] pl-[14px]">
        <svg viewBox="0 0 19 19" className="h-[19px] w-[19px]" stroke="#e6e6e6" strokeWidth="2" fill="none"><circle cx="8" cy="8" r="6.800" /><path d="m13 13 5 5" strokeWidth="2.400" /></svg>
        <span className="ml-[12px] text-[18px] tracking-[-0.300px] text-[#cfcfcf]">Search</span>
        <svg viewBox="0 0 50 28" className="ml-[112px] h-[28px] w-[50px] shrink-0 overflow-visible">
          {lamp(23, 1, '#f58cc0', '#dc3a90')}
          {lamp(0, 7, '#6ab6ee', '#3485cf')}
        </svg>
      </div>
      <div className="flex h-full pl-[2px]">
        <TaskIcon>
          <svg viewBox="0 0 30 28" className="h-[28px] w-[30px]"><defs><linearGradient id="tv" x1="0" y1="0" x2="1" y2="1"><stop offset="0" stopColor="#fff" /><stop offset="1" stopColor="#d6d6d6" /></linearGradient></defs><rect x="7.500" y="0" width="22.500" height="20" fill="url(#tv)" /><rect y="8" width="22.500" height="20" fill="#626262" /><rect x="7.500" y="8" width="15" height="12" fill="#a9a9a9" /></svg>
        </TaskIcon>
        <TaskIcon>
          <svg viewBox="0 0 30 28" className="h-[28px] w-[30px]">
            <defs>
              <linearGradient id="cp1" x1="0.600" y1="0" x2="0.200" y2="1"><stop offset="0" stopColor="#1b4fd0" /><stop offset=".4" stopColor="#18a4e8" /><stop offset=".75" stopColor="#5cc464" /><stop offset="1" stopColor="#f0c81c" /></linearGradient>
              <linearGradient id="cp2" x1="0.700" y1="0" x2="0.300" y2="1"><stop offset="0" stopColor="#a04df0" /><stop offset=".5" stopColor="#ee5296" /><stop offset="1" stopColor="#ff8a4a" /></linearGradient>
            </defs>
            <path d="M8 0h10c2.500 0 3.200 2 4 5h-3c-2 0-3 1-3.600 3L12 17.500c-.6 1.500-1.500 2-3 2H3c-3 0-3.600-2.500-2.600-6L3.200 4C4 1.500 5.500 0 8 0z" fill="url(#cp1)" />
            <path d="M22 28H12c-2.500 0-3.200-2-4-5h3c2 0 3-1 3.600-3L18 10.500c.6-1.500 1.500-2 3-2h6c3 0 3.600 2.500 2.600 6L26.800 24c-.8 2.500-2.300 4-4.800 4z" fill="url(#cp2)" />
          </svg>
        </TaskIcon>
        <TaskIcon>
          <svg viewBox="0 0 30 27" className="h-[27px] w-[30px]"><path d="M0 1.500A1.500 1.500 0 0 1 1.500 0H10l2.500 3.500H0z" fill="#dd9a00" /><path d="M0 4h12l1.500-.8L30 4v10H0z" fill="#e8a800" /><rect y="5" width="30" height="22" rx="1" fill="#ffd04d" /><path d="M5.500 27v-5a3 3 0 0 1 3-3h13a3 3 0 0 1 3 3v5z" fill="#0f6cbd" /><path d="M9 23.500h12" stroke="#0a4f92" strokeWidth="1.200" /></svg>
        </TaskIcon>
        <TaskIcon>
          <svg viewBox="0 0 29 29" className="h-[29px] w-[29px]"><path d="M8 6V1h13v5" stroke="#3bb6ee" strokeWidth="2" fill="none" /><path d="M0 5h29v20a4 4 0 0 1-4 4H4a4 4 0 0 1-4-4z" fill="#e9e9e9" /><path d="M9 11.500h5v5H9z" fill="#f25022" /><path d="M15 11.500h5v5h-5z" fill="#7fba00" /><path d="M9 17.500h5v5H9z" fill="#00a4ef" /><path d="M15 17.500h5v5h-5z" fill="#ffb900" /></svg>
        </TaskIcon>
        <TaskIcon>
          <div className="relative h-[30px] w-[30px]">
            <svg viewBox="0 0 30 30" className="h-[30px] w-[30px]"><defs><linearGradient id="ij" x1="0" y1="1" x2="1" y2="0.200"><stop offset=".4" stopColor="#087cfa" /><stop offset=".7" stopColor="#8a5fd8" /><stop offset=".95" stopColor="#fe2857" /></linearGradient></defs><path d="M10 0h20v20l-9 10H0V10z" fill="url(#ij)" /><rect x="6" y="5.500" width="19" height="19" fill="#000" /><path d="M8 21h7" stroke="#fff" strokeWidth="1.300" /></svg>
            <span className="absolute left-[8px] top-[6px] font-['Liberation_Mono'] text-[9px] font-bold leading-[10px] tracking-[-0.800px] text-white">IJ</span>
          </div>
        </TaskIcon>
        <TaskIcon>
          <div className="relative h-[30px] w-[30px]">
            <div className="absolute left-[7px] top-[6px] h-[17px] w-[16px] bg-white" />
            <SiBrave className="absolute left-0 top-0 h-[30px] w-[30px] text-[#fb4a1d]" />
            <div className="absolute left-[11px] top-[35px] h-[4px] w-[8px] rounded-full bg-[#9a9a9a]" />
          </div>
        </TaskIcon>
        <TaskIcon>
          <svg viewBox="0 0 30 30" className="h-[30px] w-[30px]"><path d="M0 9.500 2.500 7.500 22 22v7.500z" fill="#1f8ad2" /><path d="M0 20.500 2.500 22.500 22 8V.5z" fill="#0f6fb8" /><path d="M22 0l8 3v24l-8 3-1-2V2z" fill="#2fa8f0" /></svg>
        </TaskIcon>
        <TaskIcon>
          <svg viewBox="0 0 30 30" className="h-[30px] w-[30px]"><rect width="22" height="22" rx="2" fill="#eeeeee" /><path d="M4 16V4h12" stroke="#d83b01" strokeWidth="2.600" strokeDasharray="2.600 1.700" fill="none" /><path d="M6.500 16h9v-9h3v12h-12z" fill="#a5a5a5" /><path d="M17 18.500 25 15.500M18 18.500 16.500 24" stroke="#b9b9b9" strokeWidth="2" /><circle cx="27" cy="16" r="2.400" stroke="#2f9fe8" strokeWidth="1.600" fill="none" /><circle cx="16" cy="27" r="2.400" stroke="#2f9fe8" strokeWidth="1.600" fill="none" /></svg>
        </TaskIcon>
        <TaskIcon>
          <svg viewBox="0 0 30 30" className="h-[30px] w-[30px]">
            <defs>
              <linearGradient id="ed1" x1="0" y1="0.300" x2="1" y2="0.500"><stop offset="0" stopColor="#2aa7ea" /><stop offset=".5" stopColor="#31c4c8" /><stop offset="1" stopColor="#66d84a" /></linearGradient>
              <linearGradient id="ed2" x1="0" y1="0" x2="0.500" y2="1"><stop offset="0" stopColor="#1e8fe0" /><stop offset="1" stopColor="#1262b8" /></linearGradient>
            </defs>
            <circle cx="15" cy="15" r="15" fill="url(#ed2)" />
            <path d="M0 14C1 6 7 0 15 0c9 0 15 6.500 15 13 0 5-4 7.500-8 7.500-3 0-5-1-4.500-2 2-2 1.500-5-.5-7C12 7 3 8 0 14z" fill="url(#ed1)" />
            <path d="M11.500 16c-2 6 3 12.500 9.500 12.500C17 31 8 30 7 22c-.5-5 3-9.500 7-10-1.500 1-2.300 2.500-2.500 4z" fill="#0f4a92" />
            <path d="M17.500 18.500c1 4 7 4.500 11.500 2-1 3.500-4 6.500-8 8-6-.5-10-6-9.500-12 .3-2 1.500-3.500 3-4 3 0 5 3.500 3 6z" fill="#145ca8" />
            <path d="M17.500 18.500c1 3 6 3.500 12 .5l-2 4c-4 1.500-11 .5-11-3.500z" fill="#1c1c1c" />
          </svg>
        </TaskIcon>
        <TaskIcon>
          <div className="flex h-[30px] w-[30px] items-center justify-center rounded-full bg-[#1d8cf0]"><FaDocker className="h-[23px] w-[23px] text-white" /></div>
        </TaskIcon>
      </div>
      <svg viewBox="0 0 14 8" className="ml-[193px] h-[8px] w-[14px] shrink-0" stroke="#fff" strokeWidth="1.700" fill="none"><path d="m1 7.200 6-6 6 6" /></svg>
      <div className="ml-[26px] w-[30px] text-center text-[15px] leading-[20px] tracking-[-0.400px]"><p>ENG</p><p>IN</p></div>
      <svg viewBox="0 0 20 16" className="ml-[22px] h-[16px] w-[20px] shrink-0" strokeWidth="1.600" fill="none">
        <path d="M.5 6a13.400 13.400 0 0 1 19 0" stroke="#555" /><path d="M3.500 9.200a9.200 9.200 0 0 1 13 0M6.200 12a5.400 5.400 0 0 1 7.600 0" stroke="#fff" /><circle cx="10" cy="14" r="1.800" fill="#fff" />
      </svg>
      <svg viewBox="0 0 20 16" className="ml-[10px] h-[16px] w-[20px] shrink-0" stroke="#fff" strokeWidth="1.400" fill="none">
        <path d="M1 5.500h3L8.500 1.500v13L4 10.500H1zM11.500 5.500q2 2.500 0 5M14 3.500q3.500 4.500 0 9M16.500 1.500q5 6.500 0 13" />
      </svg>
      <svg viewBox="0 0 21 14" className="ml-[10px] h-[14px] w-[21px] shrink-0"><rect x=".8" y=".8" width="16.500" height="12.400" rx="2.800" stroke="#fff" strokeWidth="1.500" fill="none" /><rect x="3" y="3" width="6" height="8" fill="#fff" /><rect x="18" y="4.500" width="2.300" height="5" rx="1" fill="#fff" /></svg>
      <div className="ml-[14px] w-[82px] text-right text-[15px] leading-[20px]"><p className="tracking-[-0.300px]">10:51 AM</p><p className="tracking-[-0.230px]">31-10-2024</p></div>
      <svg viewBox="0 0 17 19" className="ml-[11px] h-[19px] w-[17px] shrink-0" stroke="#fff" strokeWidth="1.500" fill="none"><path d="M2.500 14V7.500a6 6 0 0 1 12 0V14l1.500 1.500H1zM6 16a2.500 2 0 0 0 5 0" strokeLinejoin="round" /></svg>
    </div>
  )
}

export default function App() {
  return (
    <div className="flex h-[1080px] w-[1920px] flex-col overflow-hidden bg-white font-['Open_Sans','Noto_Sans',sans-serif]">
      <TabStrip />
      <Toolbar />
      <BookmarksBar />
      <div className="flex min-h-0 flex-1 overflow-hidden">
        <main className="flex h-full w-[1897px] shrink-0 overflow-hidden pl-[217px]">
          <div className="flex flex-col gap-[17px]">
            {jobs.map((job) => <JobCard key={job.company} job={job} />)}
          </div>
          <div className="ml-[33px]"><Detail /></div>
        </main>
        <div className="flex h-full w-[23px] flex-col items-center justify-between bg-[#424242] pb-[9px] pl-px pt-[10px]">
          <div className="h-0 w-0 border-x-[6px] border-b-[6px] border-x-transparent border-b-white" />
          <div className="mt-[125px] h-[136px] w-[20px] bg-[#686868]" />
          <div className="h-0 w-0 border-x-[6px] border-t-[6px] border-x-transparent border-t-white" />
        </div>
      </div>
      <Taskbar />
    </div>
  )
}
